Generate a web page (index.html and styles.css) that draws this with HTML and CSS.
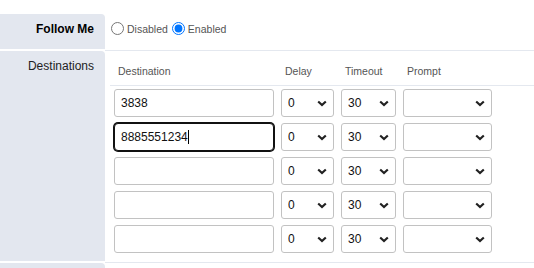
FILE: index.html
```html
<!DOCTYPE html>
<html lang="en">
<head>
 <meta charset="UTF-8" />
 <title>Follow Me</title>
 <link rel="stylesheet" href="styles.css">
</head>
<body>
 <div class="form">
   <!-- Follow Me toggle -->
   <div class="form-row">
     <div class="label bold">Follow Me</div>
     <div class="value radio-value">
       <label class="radio"><input type="radio" name="fm">Disabled</label><label class="radio"><input type="radio" name="fm" checked>Enabled</label>
     </div>
   </div>

   <!-- Destinations table -->
   <div class="form-row">
     <div class="label">Destinations</div>
     <div class="value dest-value">
       <div class="dest-grid dest-head">
         <span>Destination</span>
         <span>Delay</span>
         <span>Timeout</span>
         <span>Prompt</span>
       </div>
       <div class="dest-rows">
         <div class="dest-grid">
           <input class="text" type="text" value="3838">
           <select class="sel"><option>0</option></select>
           <select class="sel"><option>30</option></select>
           <select class="sel"><option></option></select>
         </div>
         <div class="dest-grid">
           <div class="caret-wrap"><input class="text focused" type="text" value="8885551234"></div>
           <select class="sel"><option>0</option></select>
           <select class="sel"><option>30</option></select>
           <select class="sel"><option></option></select>
         </div>
         <div class="dest-grid">
           <input class="text" type="text">
           <select class="sel"><option>0</option></select>
           <select class="sel"><option>30</option></select>
           <select class="sel"><option></option></select>
         </div>
         <div class="dest-grid">
           <input class="text" type="text">
           <select class="sel"><option>0</option></select>
           <select class="sel"><option>30</option></select>
           <select class="sel"><option></option></select>
         </div>
         <div class="dest-grid">
           <input class="text" type="text">
           <select class="sel"><option>0</option></select>
           <select class="sel"><option>30</option></select>
           <select class="sel"><option></option></select>
         </div>
       </div>
     </div>
   </div>

   <!-- next row, cut off -->
   <div class="form-row">
     <div class="label">&nbsp;</div>
     <div class="value"></div>
   </div>
 </div>
</body>
</html>
```

FILE: styles.css
```css
/* Reset */
* {
  margin: 0;
  padding: 0;
  box-sizing: border-box;
}
html, body {
  width: 100%;
  height: 100%;
  overflow: hidden;
  background: #fff;
  font-family: "Liberation Sans", Arial, sans-serif;
  color: #222;
}
.form {
  padding-top: 14px;
}
/* Each form row: label column + value column */
.form-row {
  display: grid;
  grid-template-columns: 105px 1fr;
}
.label {
  background: #e3e7ef;
  border-top-right-radius: 4px;
  margin-bottom: 2px;
  padding: 8px 11px 0 0;
  text-align: right;
  font-size: 12px;
  line-height: 14px;
  color: #222;
}
.label.bold {
  font-weight: bold;
  color: #000;
}
.value {
  border-bottom: 1px solid #e4e8ef;
  padding: 7px 0 0 5px;
}
/* Radios */
.radio-value {
  height: 37px;
  padding-left: 6px;
}
.radio {
  display: inline-flex;
  align-items: center;
  font-size: 10.5px;
  line-height: 14px;
  color: #555;
}
.radio input {
  width: 13px;
  height: 13px;
  margin: 0 3px 0 0;
}
.radio + .radio input {
  margin-left: 4px;
}
/* Destinations */
.dest-value {
  padding-bottom: 9px;
}
.dest-grid {
  display: grid;
  grid-template-columns: 160px 53px 55px 89px;
  column-gap: 7px;
  padding: 0 2px 0 4px;
}
.dest-head {
  border-bottom: 1px solid #e4e8ef;
  padding-top: 7px;
  padding-bottom: 7px;
  font-size: 10.5px;
  line-height: 13px;
  color: #555;
}
.dest-head span {
  padding-left: 4px;
}
.dest-rows {
  display: flex;
  flex-direction: column;
  gap: 6px;
  padding-top: 3px;
}
.text, .sel {
  height: 28px;
  border: 1px solid #c2c2c2;
  border-radius: 3px;
  background: #fff;
  font-family: "Liberation Sans", Arial, sans-serif;
  font-size: 12px;
  color: #111;
  outline: none;
}
.text {
  width: 160px;
  padding: 0 6px;
}
.text.focused {
  border-color: #111;
  box-shadow: 0 0 0 1px #111;
  border-radius: 4px;
}
/* fake caret after the typed number */
.caret-wrap {
  position: relative;
}
.caret-wrap::after {
  content: "";
  position: absolute;
  left: 74px;
  top: 7px;
  width: 1px;
  height: 14px;
  background: #000;
}
.sel {
  appearance: none;
  -webkit-appearance: none;
  width: 100%;
  padding: 0 6px;
  background-image: url("data:image/svg+xml,%3Csvg xmlns='http://www.w3.org/2000/svg' width='10' height='7' viewBox='0 0 10 7'%3E%3Cpath d='M1.2 1.5 L5 5 L8.8 1.5' fill='none' stroke='%23222' stroke-width='2.2'/%3E%3C/svg%3E");
  background-repeat: no-repeat;
  background-position: right 6px center;
}
```
